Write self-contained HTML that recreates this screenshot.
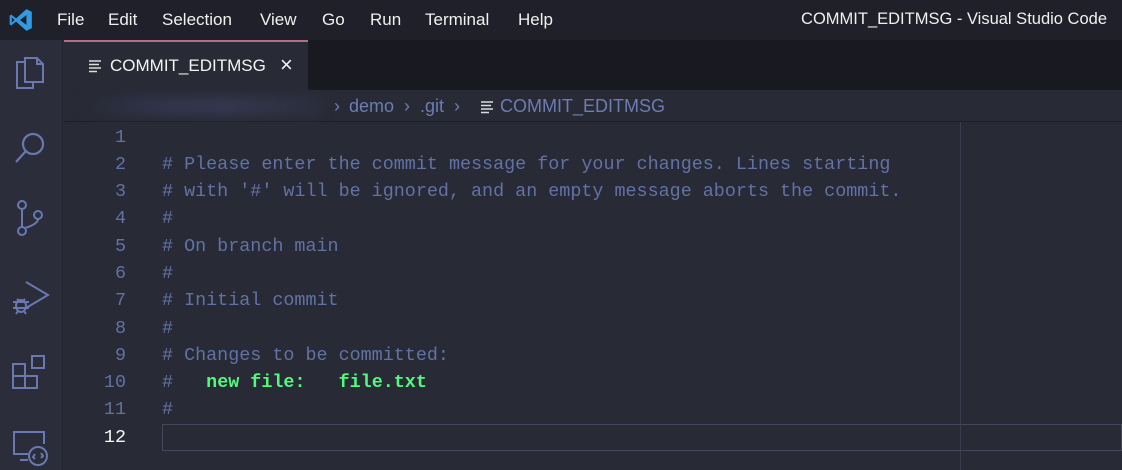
<!DOCTYPE html>
<html><head><meta charset="utf-8"><style>
*{margin:0;padding:0;box-sizing:border-box}
body{width:1122px;height:470px;overflow:hidden;background:#282a36;font-family:"Liberation Sans",sans-serif;position:relative}
.title{position:absolute;left:0;top:0;width:1122px;height:40px;background:#1f2029;color:#f0f0f0;font-size:17px}
.title span{position:absolute;top:10px}
.act{position:absolute;left:0;top:40px;width:63px;height:430px;background:#2b2d3a;border-right:1px solid #222430}
.tabs{position:absolute;left:64px;top:40px;width:1058px;height:50px;background:#191a21}
.tab{position:absolute;left:0;top:0;width:244px;height:50px;background:#282a36;border-top:2px solid #b46c8a;color:#f4f4f4;font-size:17px}
.bc{position:absolute;left:64px;top:90px;width:1058px;height:32px;background:#282a36;border-bottom:1px solid #1e1f28;color:#6d7cb3;font-size:18px}
.bc span{position:absolute;top:6px}
.ed{position:absolute;left:64px;top:122px;width:1058px;height:348px;background:#282a36}
.ln{position:absolute;left:64px;width:62px;text-align:right;font-family:"Liberation Mono",monospace;font-size:18.4px;color:#6272a4}
.cd{position:absolute;left:162px;font-family:"Liberation Mono",monospace;font-size:18.4px;color:#6272a4;white-space:pre}
.g{color:#50fa7b;font-weight:bold}
svg{position:absolute}
</style></head><body>
<div class="title">
<svg style="left:8px;top:7px" width="26" height="26" viewBox="0 0 24 24"><path d="M17 2 L22 4.5 V19.5 L17 22 L7.5 13.5 L3 17 L1.5 16 V8 L3 7 L7.5 10.5 Z M17 7.5 L11 12 L17 16.5 Z M3.5 9.5 V14.5 L6 12 Z" fill="#2f9be3" fill-rule="evenodd"/></svg>
<span style="left:57px">File</span><span style="left:108px">Edit</span><span style="left:162px">Selection</span><span style="left:260px">View</span><span style="left:322px">Go</span><span style="left:370px">Run</span><span style="left:425px">Terminal</span><span style="left:518px">Help</span>
<span style="right:15px;font-size:16.5px">COMMIT_EDITMSG - Visual Studio Code</span>
</div>
<div class="act">
<svg style="left:13px;top:16px" width="34" height="36" viewBox="0 0 34 36" fill="none" stroke="#6a78b0" stroke-width="2"><path d="M12 6 H4 V32 H20 V26"/><path d="M12 2 H24 L30 8 V26 H12 Z M24 2 V8 H30"/></svg>
<svg style="left:13px;top:88px" width="36" height="40" viewBox="0 0 36 40" fill="none" stroke="#6a78b0" stroke-width="2.2"><circle cx="20" cy="16" r="10"/><path d="M13 23 L3 34"/></svg>
<svg style="left:13px;top:158px" width="32" height="42" viewBox="0 0 32 42" fill="none" stroke="#6a78b0" stroke-width="2"><circle cx="9" cy="7" r="4"/><circle cx="9" cy="33" r="4"/><circle cx="25" cy="17" r="4"/><path d="M9 11 V29 M25 21 Q25 26 12 30"/></svg>
<svg style="left:8px;top:238px" width="42" height="40" viewBox="0 0 42 40" fill="none" stroke="#6a78b0" stroke-width="2"><path d="M18 4 L40 17 L18 30"/><ellipse cx="13" cy="28" rx="5" ry="6"/><path d="M5 24 H21 M5 30 H21 M8 36 L10 33 M18 36 L16 33 M9 21 L11 23 M17 21 L15 23"/></svg>
<svg style="left:10px;top:312px" width="40" height="40" viewBox="0 0 40 40" fill="none" stroke="#6a78b0" stroke-width="2"><rect x="3" y="12" width="12" height="12"/><rect x="3" y="24" width="12" height="12"/><rect x="15" y="24" width="12" height="12"/><rect x="22" y="4" width="12" height="12"/></svg>
<svg style="left:12px;top:390px" width="40" height="40" viewBox="0 0 40 40" fill="none" stroke="#6a78b0" stroke-width="2"><path d="M16 24 H2 V2 H32 V14"/><path d="M8 30 H16"/><circle cx="26" cy="26" r="9"/><path d="M23 24 L21 27 L23 29 M29 23 L31 26 L29 28"/></svg>
</div>
<div class="tabs"><div class="tab">
<svg style="left:24px;top:17px" width="14" height="14" viewBox="0 0 14 14" stroke="#ddd" stroke-width="1.5"><path d="M1 2H13M1 5.5H11M1 9H13M1 12.5H9"/></svg>
<span style="position:absolute;left:46px;top:14px">COMMIT_EDITMSG</span>
<span style="position:absolute;left:216px;top:10px;font-size:22px">×</span>
</div></div>
<div class="bc">
<div style="position:absolute;left:20px;top:6px;width:240px;height:20px;background:linear-gradient(90deg,#282a36,#31344a 30%,#34374d 60%,#2c2e3d);filter:blur(5px);border-radius:10px"></div>
<span style="left:270px">›</span><span style="left:285px">demo</span><span style="left:340px">›</span><span style="left:356px">.git</span><span style="left:390px">›</span>
<svg style="left:416px;top:10px" width="14" height="14" viewBox="0 0 14 14" stroke="#ddd" stroke-width="1.5"><path d="M1 2H13M1 5.5H11M1 9H13M1 12.5H9"/></svg>
<span style="left:436px">COMMIT_EDITMSG</span>
</div>
<div class="ed">
<div style="position:absolute;left:896px;top:0;width:1px;height:348px;background:#3a3c4c"></div>
<div style="position:absolute;left:98px;top:302px;width:960px;height:27px;border:1px solid #44475a"></div>
</div>
<div class="ln" style="top:127px">1</div>
<div class="ln" style="top:154px">2</div>
<div class="ln" style="top:181px">3</div>
<div class="ln" style="top:208px">4</div>
<div class="ln" style="top:236px">5</div>
<div class="ln" style="top:263px">6</div>
<div class="ln" style="top:290px">7</div>
<div class="ln" style="top:318px">8</div>
<div class="ln" style="top:345px">9</div>
<div class="ln" style="top:372px">10</div>
<div class="ln" style="top:399px">11</div>
<div class="ln" style="top:427px;color:#f8f8f2">12</div>
<div class="cd" style="top:154px"># Please enter the commit message for your changes. Lines starting</div>
<div class="cd" style="top:181px"># with '#' will be ignored, and an empty message aborts the commit.</div>
<div class="cd" style="top:208px">#</div>
<div class="cd" style="top:236px"># On branch main</div>
<div class="cd" style="top:263px">#</div>
<div class="cd" style="top:290px"># Initial commit</div>
<div class="cd" style="top:318px">#</div>
<div class="cd" style="top:345px"># Changes to be committed:</div>
<div class="cd" style="top:372px">#   <span class="g">new file:   file.txt</span></div>
<div class="cd" style="top:399px">#</div>
</body></html>
